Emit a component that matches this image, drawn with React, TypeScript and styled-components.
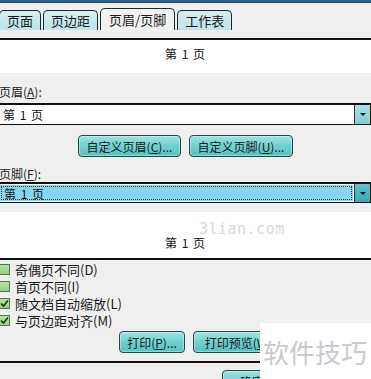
import styled, { createGlobalStyle } from "styled-components";

const GlobalStyle = createGlobalStyle`
  html, body {
    margin: 0;
    padding: 0;
    background: #efefef;
    overflow: hidden;
  }
  body {
    font-family: "Noto Sans CJK SC", "Noto Sans", sans-serif;
    font-size: 12px;
    color: #111;
  }
`;

const Page = styled.div`
  position: relative;
  width: 371px;
  height: 379px;
  overflow: hidden;
  background: #efefef;
`;

const TopStrip = styled.div`
  height: 3px;
  background: linear-gradient(#3a6a90, #1c4468);
`;

const TabBar = styled.div`
  display: flex;
  align-items: flex-end;
  gap: 2px;
  height: 27px;
  margin-left: -1px;
`;

const Tab = styled.div<{ $active?: boolean }>`
  box-sizing: border-box;
  height: ${(p) => (p.$active ? "22px" : "20px")};
  padding: 0 ${(p) => (p.$active ? "8px" : "7px")};
  display: flex;
  align-items: center;
  border: 1px solid #1a2a30;
  border-bottom: none;
  border-radius: 5px 5px 0 0;
  background: ${(p) => (p.$active ? "#f2f2f2" : "linear-gradient(#d4eef2, #bfe3ea)")};
  font-size: 13px;
  line-height: 1;
  color: #1a1a1a;
`;

const TabGap = styled.div`
  height: 8px;
`;

const Preview = styled.div<{ $h: number; $top?: boolean }>`
  position: relative;
  box-sizing: border-box;
  height: ${(p) => p.$h}px;
  background: #fff;
  border-top: ${(p) => (p.$top ? "2px solid #111" : "none")};
  border-bottom: ${(p) => (p.$top ? "none" : "2px solid #111")};
  display: flex;
  justify-content: center;
  align-items: ${(p) => (p.$top ? "flex-start" : "flex-end")};
  padding: ${(p) => (p.$top ? "5px 0 0" : "0 0 7px")};
`;

const PreviewText = styled.span`
  font-size: 12px;
  letter-spacing: 1px;
`;

const Watermark = styled.span`
  position: absolute;
  left: 199px;
  top: 8px;
  font-family: "DejaVu Sans Mono", "Liberation Mono", monospace;
  font-size: 15px;
  color: #d8d8d8;
  letter-spacing: 0.5px;
`;

const FieldLabel = styled.div<{ $top: number }>`
  margin: ${(p) => p.$top}px 0 0 -1px;
  height: 14px;
  line-height: 14px;
  font-size: 12px;
  color: #222;
`;

const Combo = styled.div<{ $selected?: boolean; $top: number }>`
  box-sizing: border-box;
  display: flex;
  height: ${(p) => (p.$selected ? "21px" : "22px")};
  margin: ${(p) => p.$top}px 0 0 -2px;
  border: 1px solid #111;
  border-top-width: 2px;
  background: #fff;
`;

const ComboText = styled.div<{ $selected?: boolean }>`
  flex: 1;
  display: flex;
  align-items: center;
  padding-left: 4px;
  font-size: 12px;
  letter-spacing: 1px;
  background: ${(p) => (p.$selected ? "#86d6f0" : "#fff")};
  outline: ${(p) => (p.$selected ? "1px dotted #333" : "none")};
  outline-offset: -2px;
  margin: ${(p) => (p.$selected ? "1px" : "0")};
`;

const DropButton = styled.div<{ $selected?: boolean }>`
  width: 15px;
  display: flex;
  align-items: center;
  justify-content: center;
  border-left: 1px solid #333;
  background: ${(p) => (p.$selected ? "linear-gradient(#5cc6cc, #39aab4)" : "linear-gradient(#a6e2e6, #7fcfd4)")};
`;

const Arrow = styled.div`
  width: 0;
  height: 0;
  border-left: 3px solid transparent;
  border-right: 3px solid transparent;
  border-top: 3px solid #111;
`;

const ButtonRow = styled.div<{ $top: number; $left?: number }>`
  display: flex;
  gap: 8px;
  margin-top: ${(p) => p.$top}px;
  padding-left: ${(p) => p.$left ?? 0}px;
  justify-content: ${(p) => (p.$left ? "flex-start" : "center")};
`;

const Button = styled.div<{ $w: number }>`
  box-sizing: border-box;
  width: ${(p) => p.$w}px;
  height: 22px;
  display: flex;
  align-items: center;
  justify-content: center;
  border: 1px solid #244848;
  border-radius: 4px;
  background: linear-gradient(#9ee4e0, #6ccfcc 55%, #55c2c2);
  box-shadow: inset 0 0 0 1px rgba(255, 255, 255, 0.35);
  font-size: 12px;
  color: #1a1a1a;
  white-space: nowrap;
  overflow: hidden;
`;

const Checks = styled.div`
  display: flex;
  flex-direction: column;
  gap: 4px;
  margin-top: 3px;
  margin-left: -1px;
`;

const CheckRow = styled.div`
  display: flex;
  align-items: center;
  gap: 5px;
  height: 13px;
`;

const Box = styled.div`
  box-sizing: border-box;
  width: 11px;
  height: 11px;
  border: 1px solid #557755;
  background: linear-gradient(#b6e2a4, #96d080);
  display: flex;
  align-items: center;
  justify-content: center;
`;

const CheckLabel = styled.span`
  font-size: 13px;
  line-height: 13px;
  color: #1a1a1a;
`;

const BottomLine = styled.div`
  height: 2px;
  background: #111;
  margin-top: 8px;
`;

const OkButton = styled(Button)`
  margin: 7px 0 0 222px;
  border-radius: 4px 4px 0 0;
  align-items: flex-start;
  padding-top: 2px;
`;

const Stamp = styled.div`
  position: absolute;
  left: 260px;
  top: 323px;
  width: 111px;
  height: 56px;
  background: #fff;
  display: flex;
  align-items: center;
  padding-left: 3px;
  box-sizing: border-box;
  font-family: "Noto Sans CJK SC", sans-serif;
  font-size: 26px;
  color: #c9c9ce;
  white-space: nowrap;
`;

function Check({ checked, label }: { checked?: boolean; label: string }) {
  return (
    <CheckRow>
      <Box>
        {checked && (
          <svg width="9" height="9" viewBox="0 0 9 9">
            <path d="M1 4.5 L3.5 7 L8 1.5" fill="none" stroke="#1a3a1a" strokeWidth="1.6" />
          </svg>
        )}
      </Box>
      <CheckLabel>{label}</CheckLabel>
    </CheckRow>
  );
}

export default function App() {
  return (
    <Page>
      <GlobalStyle />
      <TopStrip />
      <TabBar>
        <Tab>页面</Tab>
        <Tab>页边距</Tab>
        <Tab $active>页眉/页脚</Tab>
        <Tab>工作表</Tab>
      </TabBar>
      <TabGap />
      <Preview $h={35} $top>
        <PreviewText>第 1 页</PreviewText>
      </Preview>
      <FieldLabel $top={12}>页眉(<u>A</u>):</FieldLabel>
      <Combo $top={4}>
        <ComboText>第 1 页</ComboText>
        <DropButton>
          <Arrow />
        </DropButton>
      </Combo>
      <ButtonRow $top={10}>
        <Button $w={103}>自定义页眉(<u>C</u>)...</Button>
        <Button $w={104}>自定义页脚(<u>U</u>)...</Button>
      </ButtonRow>
      <FieldLabel $top={10}>页脚(<u>F</u>):</FieldLabel>
      <Combo $selected $top={1}>
        <ComboText $selected>第 1 页</ComboText>
        <DropButton $selected>
          <Arrow />
        </DropButton>
      </Combo>
      <Preview $h={48} style={{ marginTop: 9 }}>
        <Watermark>3lian.com</Watermark>
        <PreviewText>第 1 页</PreviewText>
      </Preview>
      <Checks>
        <Check label="奇偶页不同(D)" />
        <Check label="首页不同(I)" />
        <Check checked label="随文档自动缩放(L)" />
        <Check checked label="与页边距对齐(M)" />
      </Checks>
      <ButtonRow $top={4} $left={119}>
        <Button $w={66}>打印(<u>P</u>)...</Button>
        <Button $w={90}>打印预览(<u>W</u>)</Button>
      </ButtonRow>
      <BottomLine />
      <OkButton $w={60}>确定</OkButton>
      <Stamp>软件技巧</Stamp>
    </Page>
  );
}
